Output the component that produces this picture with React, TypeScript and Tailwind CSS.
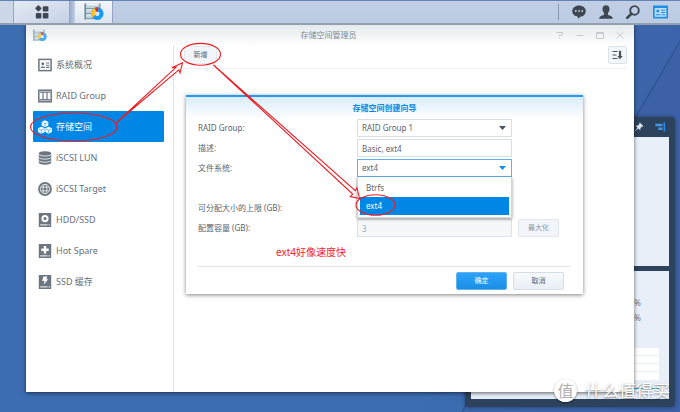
import React from 'react';

const CJK = "font-['Noto_Sans','Noto_Sans_CJK_SC',sans-serif]";

type IconProps = { className?: string };

function StorageLogo({ className }: IconProps) {
  return (
    <svg viewBox="0 0 20 18" className={className} aria-hidden="true">
      <rect x="0.5" y="0.5" width="16" height="16" rx="0.5" fill="#c3d3dc" />
      <rect x="0.5" y="0.5" width="1.5" height="16" fill="#6d8da0" />
      <rect x="15" y="0.5" width="1.5" height="16" fill="#8ba5b3" />
      <path d="M2 5.5h13M2 10.5h13M2 15.5h13" stroke="#7d9bab" strokeWidth="1" />
      <path d="M3 1.5h11" stroke="#f1f6f9" strokeWidth="1.6" />
      <path d="M3 7h11M3 12.2h8" stroke="#e6eef2" strokeWidth="1" />
      <circle cx="13.3" cy="10.6" r="6.3" fill="#169bf2" />
      <path d="M13.3 10.6L8.2 14.4A6.3 6.3 0 0 1 10.6 5z" fill="#fbc02d" />
      <path d="M13.3 10.6L10.8 4.8A6.3 6.3 0 0 1 14.6 4.4z" fill="#e02c2c" />
      <circle cx="13.3" cy="10.8" r="2.1" fill="#f4f8fb" />
      <circle cx="13.3" cy="10.8" r="0.8" fill="#8fb6cf" />
    </svg>
  );
}

function AppsIcon() {
  return (
    <svg viewBox="0 0 14 14" className="h-3.5 w-3.5" fill="#3d4751" aria-hidden="true">
      <rect x="1" y="1" width="4.8" height="4.8" rx="0.8" transform="rotate(45 3.4 3.4)" />
      <rect x="7.8" y="1.2" width="5.6" height="5.4" rx="1" />
      <rect x="0.8" y="8" width="5.6" height="5.4" rx="1" />
      <rect x="7.8" y="8" width="5.6" height="5.4" rx="1" />
    </svg>
  );
}

function OverviewIcon() {
  return (
    <svg viewBox="0 0 14 14" className="h-3.5 w-3.5 shrink-0" aria-hidden="true">
      <rect x="0.9" y="1.4" width="12.2" height="11.2" fill="none" stroke="#6c7680" strokeWidth="1.5" />
      <circle cx="4.8" cy="5.8" r="1.5" fill="#6c7680" />
      <path d="M2.8 10V8.6h4.1V10z" fill="#6c7680" />
      <path d="M8 5h3.4M8 7.2h3.4M8 9.4h3.4" stroke="#6c7680" strokeWidth="1.1" />
    </svg>
  );
}

function RaidIcon() {
  return (
    <svg viewBox="0 0 14 14" className="h-3.5 w-3.5 shrink-0" aria-hidden="true">
      <rect x="0.8" y="1.2" width="12.4" height="11.6" fill="none" stroke="#6c7680" strokeWidth="1.5" />
      <path d="M2 3.2h10M5 2.5v8.5M9 2.5v8.5" stroke="#6c7680" strokeWidth="1.2" />
      <path d="M1.5 10.8h11" stroke="#6c7680" strokeWidth="1.4" />
    </svg>
  );
}

function Cube({ x, y }: { x: number; y: number }) {
  return (
    <g transform={`translate(${x} ${y})`}>
      <path d="M0 -3.5L3.3 -1.9V1.9L0 3.5L-3.3 1.9V-1.9z" fill="#fff" />
      <path d="M-2.4 -1.3L0 0L2.4 -1.3M0 0V2.8" fill="none" stroke="#0086e5" strokeWidth="0.6" />
    </g>
  );
}

function VolumeIcon() {
  return (
    <svg viewBox="0 0 14 14" className="h-3.5 w-3.5 shrink-0" aria-hidden="true">
      <Cube x={7} y={3.7} />
      <Cube x={3.4} y={10.2} />
      <Cube x={10.6} y={10.2} />
    </svg>
  );
}

function LunIcon() {
  return (
    <svg viewBox="0 0 14 14" className="h-3.5 w-3.5 shrink-0" aria-hidden="true">
      <path d="M0.8 2.5C0.8 -0.4 13.2 -0.4 13.2 2.5V11.5C13.2 14.4 0.8 14.4 0.8 11.5z" fill="#6c7680" />
      <path
        d="M0.8 3.3C2 5.6 12 5.6 13.2 3.3M0.8 6.4C2 8.7 12 8.7 13.2 6.4M0.8 9.5C2 11.8 12 11.8 13.2 9.5"
        fill="none"
        stroke="#fff"
        strokeWidth="0.8"
      />
    </svg>
  );
}

function TargetIcon() {
  return (
    <svg viewBox="0 0 14 14" className="h-3.5 w-3.5 shrink-0" aria-hidden="true">
      <circle cx="7" cy="7" r="6.9" fill="#6c7680" />
      <g fill="none" stroke="#fff" strokeWidth="0.7">
        <circle cx="7" cy="7" r="4.7" />
        <ellipse cx="7" cy="7" rx="2" ry="4.7" />
        <path d="M2.8 5.2h8.4M2.8 8.8h8.4" />
      </g>
    </svg>
  );
}

function DriveIcon({ children }: { children: React.ReactNode }) {
  return (
    <svg viewBox="0 0 14 14" className="h-3.5 w-3.5 shrink-0" aria-hidden="true">
      <rect x="0.8" y="0" width="12.4" height="14" rx="0.6" fill="#6c7680" />
      <path d="M2.2 11.9h7.4M10.6 11.9h1.4" stroke="#fff" strokeWidth="1" />
      {children}
    </svg>
  );
}

const navItems = [
  { label: '系统概况', icon: <OverviewIcon /> },
  { label: 'RAID Group', icon: <RaidIcon /> },
  { label: '存储空间', icon: <VolumeIcon />, active: true },
  { label: 'iSCSI LUN', icon: <LunIcon /> },
  { label: 'iSCSI Target', icon: <TargetIcon /> },
  {
    label: 'HDD/SSD',
    icon: (
      <DriveIcon>
        <circle cx="7" cy="5.6" r="2.6" fill="none" stroke="#fff" strokeWidth="2" />
      </DriveIcon>
    ),
  },
  {
    label: 'Hot Spare',
    icon: (
      <DriveIcon>
        <path d="M7 2v7.4M3.3 5.7h7.4" stroke="#fff" strokeWidth="2.4" />
      </DriveIcon>
    ),
  },
  {
    label: 'SSD 缓存',
    icon: (
      <DriveIcon>
        <path d="M5.4 1.6h4L8.3 4.3h2L5.6 9.8L6.6 6H4.2z" fill="#fff" />
      </DriveIcon>
    ),
  },
];

function Taskbar() {
  return (
    <header className="relative z-30 flex h-[25px] shrink-0 items-stretch border-t border-b-2 border-t-[#6482b4] border-b-[#929fae] bg-linear-to-b from-[#c1cfe6] to-[#bccbe2]">
      <div className="w-[14px] border-r border-[#93a5c2] bg-[#ccd7e8]" />
      <button
        aria-label="主菜单"
        className="flex w-[55px] items-center justify-center bg-linear-to-br from-[#e3eaf4] to-[#c5d2e6]"
      >
        <AppsIcon />
      </button>
      <div className="w-[6px] bg-linear-to-r from-[#8fa4c6] to-[#c3d0e5]" />
      <button
        aria-label="存储空间管理员"
        className="flex w-[38px] items-center justify-center border-r border-[#93a5c2] bg-linear-to-b from-[#f3f6fa] to-[#dde5f0]"
      >
        <StorageLogo className="h-[18px] w-5" />
      </button>
      <div className="flex-1" />
      <div className="my-[3px] mr-[13px] w-px bg-[#8796ae]" />
      <div className="flex items-center gap-[13px] pr-3">
        <button aria-label="通知">
          <svg viewBox="0 0 14 14" className="h-3.5 w-3.5">
            <path
              d="M7 0.4c3.9 0 6.8 2.3 6.8 5.6S11 11.5 8.8 11.6L6 13.8l-0.3-2.3C2.4 11.2 0.2 8.9 0.2 6S3.1 0.4 7 0.4z"
              fill="#3d4751"
            />
            <circle cx="3.8" cy="6" r="0.9" fill="#c3d0e5" />
            <circle cx="7" cy="6" r="0.9" fill="#c3d0e5" />
            <circle cx="10.2" cy="6" r="0.9" fill="#c3d0e5" />
          </svg>
        </button>
        <button aria-label="用户">
          <svg viewBox="0 0 14 14" className="h-3.5 w-3.5">
            <path
              d="M7 0.2c2.2 0 3.5 1.5 3.5 3.7 0 1.8-0.8 3.3-1.6 4v1.6c0.3 1 4.9 1 5 4.3H0.1c0.1-3.3 4.7-3.3 5-4.3V7.9C4.3 7.2 3.5 5.7 3.5 3.9 3.5 1.7 4.8 0.2 7 0.2z"
              fill="#3d4751"
            />
          </svg>
        </button>
        <button aria-label="搜索">
          <svg viewBox="0 0 14 14" className="h-3.5 w-3.5">
            <circle cx="8.5" cy="5.4" r="4.3" fill="none" stroke="#3d4751" strokeWidth="1.9" />
            <path d="M5.4 8.7L1.2 12.9" stroke="#3d4751" strokeWidth="2.7" strokeLinecap="round" />
          </svg>
        </button>
        <button aria-label="小工具">
          <svg viewBox="0 0 15 14" className="h-3.5 w-[15px]">
            <rect x="0" y="0.5" width="15" height="13" rx="0.8" fill="#1d8fe6" />
            <rect x="1.7" y="3" width="11.6" height="8.8" fill="#bcdcf8" />
            <circle cx="4.8" cy="6" r="1.5" fill="#1d8fe6" />
            <path d="M2.8 9.8h5M8 5.3h4M8 7.5h4M9 9.8h3" stroke="#1d8fe6" strokeWidth="1.1" />
          </svg>
        </button>
      </div>
    </header>
  );
}

function WidgetPanel() {
  return (
    <aside className="absolute top-[117px] right-[5px] bottom-[5px] flex w-[210px] flex-col rounded-sm bg-[#2d425c] px-1.5 pb-2 shadow-[0_0_4px_rgba(0,0,0,0.4)]">
      <div className="flex h-5 items-center justify-end gap-[11px] pr-1">
        <button aria-label="固定">
          <svg viewBox="0 0 10 10" className="h-2.5 w-2.5">
            <path
              d="M5.8 0.5L9.5 4.2 8.5 4.8 7.9 4.6 6.4 6.3 6.3 8.3 4.3 6.5 0.6 9.6 3.5 5.7 1.7 3.8 3.9 3.6 5.5 2.1 5.2 1.3z"
              fill="#dce6f0"
            />
          </svg>
        </button>
        <button aria-label="停靠">
          <svg viewBox="0 0 10 10" className="h-2.5 w-2.5">
            <path d="M9.3 0.5v9" stroke="#2f8fe8" strokeWidth="1.4" />
            <path d="M0.3 3h7.2M3.3 6.8h4.2" stroke="#3f97ea" strokeWidth="2.4" />
          </svg>
        </button>
      </div>
      <div className="flex flex-1 flex-col gap-[5px]">
        <div className="flex-1 bg-[#e8eff8]" />
        <div className="flex flex-1 flex-col bg-[#e8eff8] pr-2.5 text-right text-[8px] leading-[15px] text-[#6c7680]">
          <div className="pt-6 pr-[18px]">%</div>
          <div className="pr-[18px]">%</div>
          <div className="mt-[23px] ml-2 flex h-8 flex-col gap-px">
            <div className="flex-1 bg-white" />
            <div className="flex-1 bg-white" />
            <div className="flex-1 bg-white" />
            <div className="flex-1 bg-white" />
          </div>
          <div className="mt-2 ml-2 h-px bg-linear-to-r from-[#2f9be0] from-80% to-[#35b08a]" />
        </div>
      </div>
    </aside>
  );
}

function WindowControls() {
  return (
    <div className="flex items-center gap-3">
      <button aria-label="帮助">
        <svg viewBox="0 0 8 8" className="h-2 w-2" fill="none" stroke="#c6cace">
          <path d="M0.5 1.5h6v2.5h-3v1.5M3.5 6.5v1" />
        </svg>
      </button>
      <button aria-label="最小化">
        <svg viewBox="0 0 8 8" className="h-2 w-2" fill="none" stroke="#c6cace">
          <path d="M0.5 4.5h7" />
        </svg>
      </button>
      <button aria-label="最大化窗口">
        <svg viewBox="0 0 8 8" className="h-2 w-2" fill="none" stroke="#c6cace">
          <path d="M0.5 1.5h7v6h-7zM0.5 2.5h7" />
        </svg>
      </button>
      <button aria-label="关闭">
        <svg viewBox="0 0 8 8" className="h-2 w-2" fill="none" stroke="#c6cace">
          <path d="M0.5 1l7 6.5M7.5 1L0.5 7.5" />
        </svg>
      </button>
    </div>
  );
}

function Caret({ className }: IconProps) {
  return (
    <svg viewBox="0 0 7 4" className={className} fill="currentColor" aria-hidden="true">
      <path d="M0 0h7L3.5 4z" />
    </svg>
  );
}

const fieldBase = 'block h-[18px] w-full appearance-none rounded-none border px-1 text-[8px] leading-4 outline-none';
const buttonBase = 'h-[18px] rounded-[2px] border text-[7px] leading-4';

function FormRow({ id, label, children }: { id: string; label: string; children?: React.ReactNode }) {
  return (
    <div className="flex h-5 items-start">
      <label htmlFor={id} className="w-[159px] shrink-0 text-[8px] leading-[18px]">
        {label}
      </label>
      {children}
    </div>
  );
}

function WizardDialog() {
  return (
    <section
      role="dialog"
      aria-labelledby="wizard-title"
      className="mt-[26px] ml-3 w-[397px] max-w-full border-t-2 border-[#2599ee] bg-white text-[#59636e] shadow-[0_1px_4px_rgba(0,0,0,0.5)]"
    >
      <h2
        id="wizard-title"
        className="h-[22px] bg-linear-to-b from-[#d9ecfb] to-white text-center text-[8px] leading-[21px] font-bold text-[#0f86e0]"
      >
        存储空间创建向导
      </h2>
      <form className="pl-3" onSubmit={(e) => e.preventDefault()}>
        <FormRow id="raid" label="RAID Group:">
          <div className="relative w-[155px]">
            <select id="raid" className={`${fieldBase} border-[#d8dee6] bg-white`}>
              <option>RAID Group 1</option>
            </select>
            <Caret className="pointer-events-none absolute top-[7px] right-1.5 h-1 w-[7px] text-[#4a545e]" />
          </div>
        </FormRow>
        <FormRow id="desc" label="描述:">
          <div className="w-[155px]">
            <input id="desc" defaultValue="Basic, ext4" className={`${fieldBase} border-[#d8dee6] bg-white`} />
          </div>
        </FormRow>
        <FormRow id="fs" label="文件系统:">
          <div className="relative w-[155px]">
            <select id="fs" defaultValue="ext4" className={`${fieldBase} border-[#62b1ee] bg-white`}>
              <option>Btrfs</option>
              <option>ext4</option>
            </select>
            <Caret className="pointer-events-none absolute top-[7px] right-1.5 h-1 w-[7px] text-[#0f8ff0]" />
            <ul
              role="listbox"
              aria-label="文件系统"
              className="absolute top-[18px] left-0 z-10 w-full border border-t-0 border-[#d0d6dc] bg-white px-0.5 py-0.5 text-[8px] leading-[18px] shadow-[0_1px_3px_rgba(0,0,0,0.4)]"
            >
              <li role="option" aria-selected="false" className="px-1.5">
                Btrfs
              </li>
              <li role="option" aria-selected="true" className="bg-[#0086e5] px-1.5 text-white">
                ext4
              </li>
            </ul>
          </div>
        </FormRow>
        <div className="h-5" />
        <FormRow id="limit" label="可分配大小的上限 (GB):">
          <output id="limit" />
        </FormRow>
        <FormRow id="size" label="配置容量 (GB):">
          <div className="w-[155px]">
            <input
              id="size"
              defaultValue="3"
              disabled
              className={`${fieldBase} border-[#dde2e8] bg-[#f5f7f9] text-[#a5adb5]`}
            />
          </div>
          <button className={`${buttonBase} ml-1.5 w-[41px] border-[#dfe6ee] bg-[#f2f6fa] text-[#8d97a2]`} disabled>
            最大化
          </button>
        </FormRow>
      </form>
      <footer className="mt-[27px] mr-[13px] ml-3 flex justify-end gap-1.5 border-t border-[#dfe3e7] pt-[5px] pr-1.5 pb-1">
        <button className={`${buttonBase} w-[51px] border-[#5fb2f0] bg-linear-to-b from-[#2ea2fa] to-[#1a8fe6] text-white`}>
          确定
        </button>
        <button
          className={`${buttonBase} w-[51px] border-[#d5dde6] bg-linear-to-b from-[#f7fafc] to-[#e9eff5] text-[#59636e]`}
        >
          取消
        </button>
      </footer>
    </section>
  );
}

function StorageWindow() {
  return (
    <div className="absolute top-6 right-[46px] bottom-5 left-[26px] flex flex-col bg-white shadow-[0_1px_4px_rgba(0,0,0,0.6)]">
      <div className="grid h-[22px] shrink-0 grid-cols-3 items-center bg-linear-to-b from-[#e4e9ec] to-white pr-2.5 pl-[7px]">
        <StorageLogo className="h-[13px] w-3.5 opacity-80" />
        <h1 className="text-center text-[8px] leading-none text-[#7c868f]">存储空间管理员</h1>
        <div className="flex justify-end">
          <WindowControls />
        </div>
      </div>
      <div className="flex min-h-0 flex-1">
        <nav className="w-[148px] shrink-0 border-r border-[#e2e4e6] pt-[3px] pr-[9px] pl-[7px]">
          {navItems.map((item) => (
            <a
              key={item.label}
              href="#"
              className={
                item.active
                  ? 'flex h-[31px] items-center gap-1 rounded-[1px] bg-[#0086e5] pl-[5px] text-[9px] text-white'
                  : 'flex h-[31px] items-center gap-1 pl-[5px] text-[9px] text-[#66707a]'
              }
            >
              {item.icon}
              {item.label}
            </a>
          ))}
        </nav>
        <main className="min-w-0 flex-1">
          <div className="mr-[7px] ml-2.5 flex h-[23px] items-start justify-between border-b border-[#edf0f3]">
            <button className={`${buttonBase} w-[33px] border-[#e3e9f0] bg-[#f3f6f9] text-[#59636e]`}>新增</button>
            <button
              aria-label="排序"
              className={`${buttonBase} flex w-[19px] items-center justify-center border-[#d9e1ea] bg-[#f3f7fa]`}
            >
              <svg viewBox="0 0 11 10" className="h-2.5 w-[11px]">
                <path d="M0.5 1.5h5M0.5 5h4M0.5 8.5h5" stroke="#4a545e" strokeWidth="1.2" />
                <path d="M6.9 0.8h2.2v5.2h1.6L8 9.3 5.3 6h1.6z" fill="#4a545e" />
              </svg>
            </button>
          </div>
          <WizardDialog />
        </main>
      </div>
    </div>
  );
}

function Annotations() {
  return (
    <div className="pointer-events-none absolute inset-0 z-40">
      <svg width="680" height="412" viewBox="0 0 680 412" fill="none" stroke="#ee1c22" strokeWidth="1.1">
        <ellipse cx="73.8" cy="127" rx="43.3" ry="14" />
        <ellipse cx="200.5" cy="54.3" rx="20" ry="10.9" />
        <ellipse cx="375.5" cy="205" rx="19.5" ry="10.3" />
        <path d="M116 123L176 67.3L172 67.8L182.5 62.8L180 73L178.8 69.8z" />
        <path d="M213.5 65L355.3 190.6L357 187.7L359.5 198.5L350.3 196.6L352.7 194z" />
      </svg>
      <p className="absolute top-[245px] left-[276px] text-[10px] leading-[14px] whitespace-nowrap text-[#f5231f]">
        ext4好像速度快
      </p>
    </div>
  );
}

function Watermark() {
  return (
    <div className="pointer-events-none absolute right-2.5 bottom-2.5 z-50 flex items-center gap-2 text-white">
      <span className="flex h-[23px] w-[23px] items-center justify-center rounded-full bg-white text-[16px] leading-none text-[#b0b0b0] shadow-[0_1px_2px_rgba(0,0,0,0.5)]">
        值
      </span>
      <span className="text-[17px] leading-[23px] [text-shadow:0_1px_2px_rgba(0,0,0,0.5)]">什么值得买</span>
    </div>
  );
}

export default function App() {
  return (
    <div
      className={`relative flex h-screen w-full flex-col overflow-hidden bg-linear-to-r from-[#3b6db0] from-60% to-[#3c64aa] ${CJK}`}
    >
      <svg className="absolute inset-0" width="680" height="412" viewBox="0 0 680 412" aria-hidden="true">
        <path d="M682 38L462 412H680V38z" fill="#3c5da4" fillOpacity="0.35" />
        <path d="M682 38L462 412" stroke="#2f5494" strokeWidth="1.5" />
      </svg>
      <Taskbar />
      <WidgetPanel />
      <StorageWindow />
      <Annotations />
      <Watermark />
    </div>
  );
}
